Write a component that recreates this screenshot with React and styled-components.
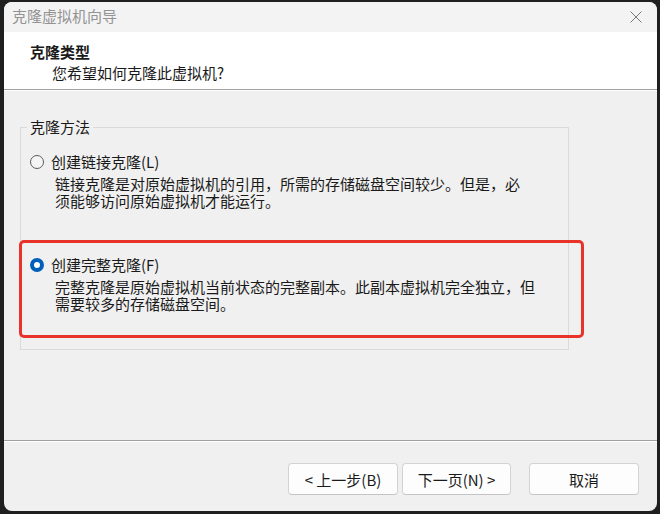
import React from 'react'
import styled, { createGlobalStyle } from 'styled-components'

const GlobalStyle = createGlobalStyle`
    html, body {
        margin: 0;
        padding: 0;
        background: #1f1f1f;
    }
    * {
        box-sizing: border-box;
    }
`

const options = [
    {
        key: 'link',
        label: '创建链接克隆(L)',
        lines: ['链接克隆是对原始虚拟机的引用，所需的存储磁盘空间较少。但是，必', '须能够访问原始虚拟机才能运行。'],
        checked: false,
    },
    {
        key: 'full',
        label: '创建完整克隆(F)',
        lines: ['完整克隆是原始虚拟机当前状态的完整副本。此副本虚拟机完全独立，但', '需要较多的存储磁盘空间。'],
        checked: true,
    },
]

const App = () => {
    return (
        <Screen>
            <GlobalStyle />
            <Window>
                <TitleBar>
                    <WindowTitle>克隆虚拟机向导</WindowTitle>
                    <CloseIcon viewBox="0 0 12 12">
                        <path d="M0.5 0.5 L11.5 11.5 M11.5 0.5 L0.5 11.5" />
                    </CloseIcon>
                </TitleBar>

                <Header>
                    <HeaderTitle>克隆类型</HeaderTitle>
                    <HeaderSub>您希望如何克隆此虚拟机?</HeaderSub>
                </Header>

                <Body>
                    <Group>
                        <Legend>克隆方法</Legend>
                        <OptionList>
                            {options.map(opt => (
                                <Option key={opt.key}>
                                    <OptionRow>
                                        <Radio $checked={opt.checked} />
                                        <OptionLabel>{opt.label}</OptionLabel>
                                    </OptionRow>
                                    <Description>
                                        {opt.lines.map(line => <Line key={line}>{line}</Line>)}
                                    </Description>
                                </Option>
                            ))}
                        </OptionList>
                    </Group>
                    <Highlight />
                </Body>

                <Footer>
                    <Button>&lt; 上一步(B)</Button>
                    <Button $w="109px">下一页(N) &gt;</Button>
                    <Button $spaced>取消</Button>
                </Footer>
            </Window>
        </Screen>
    )
}

const Screen = styled.div`
    width: 660px;
    height: 514px;
    padding: 2px 3px 3px 4px;
    background: #1f1f1f;
    font-family: "Noto Sans CJK SC", "Noto Sans", sans-serif;
    font-size: 15px;
    color: #1a1a1a;
`
const Window = styled.div`
    width: 653px;
    height: 509px;
    display: flex;
    flex-direction: column;
    border-radius: 8px;
    overflow: hidden;
    background: #f0f0f0;
`
const TitleBar = styled.div`
    height: 30px;
    flex: none;
    display: flex;
    align-items: center;
    justify-content: space-between;
    padding: 0 15px 0 8px;
    background: #f3f3f3;
`
const WindowTitle = styled.div`
    color: #939393;
    font-size: 15px;
    line-height: 20px;
    margin-top: -2px;
`
const CloseIcon = styled.svg`
    width: 12px;
    height: 12px;
    stroke: #7a7a7a;
    stroke-width: 1;
    fill: none;
`
const Header = styled.div`
    height: 58px;
    flex: none;
    background: #ffffff;
    border-bottom: 1px solid #a0a0a0;
    padding: 10px 0 0 26px;
`
const HeaderTitle = styled.div`
    font-weight: 700;
    line-height: 20px;
`
const HeaderSub = styled.div`
    margin: 1px 0 0 22px;
    line-height: 20px;
`
const Body = styled.div`
    flex: 1;
    position: relative;
    border-top: 1px solid #ffffff;
    padding: 27px 0 0 16px;
`
const Group = styled.fieldset`
    width: 549px;
    margin: 0;
    border: 1px solid #dadada;
    padding: 16px 0 37px 9px;
`
const Legend = styled.legend`
    margin-left: -3px;
    padding: 0 3px;
    line-height: 18px;
`
const OptionList = styled.div`
    display: flex;
    flex-direction: column;
    gap: 46px;
`
const Option = styled.div`
    display: flex;
    flex-direction: column;
`
const OptionRow = styled.div`
    display: flex;
    align-items: center;
    gap: 7px;
    height: 20px;
`
const Radio = styled.span`
    width: 14px;
    height: 14px;
    flex: none;
    border-radius: 50%;
    border: ${p => p.$checked ? '4px solid #005fb8' : '1px solid #5c5c5c'};
    background: ${p => p.$checked ? '#ffffff' : '#f5f5f5'};
`
const OptionLabel = styled.span`
    line-height: 20px;
`
const Description = styled.div`
    margin: 3px 0 0 25px;
    white-space: nowrap;
`
const Line = styled.div`
    height: 17px;
    line-height: 17px;
`
const Highlight = styled.div`
    position: absolute;
    left: 15px;
    top: 149px;
    width: 565px;
    height: 98px;
    border: 3px solid #e8322a;
    border-radius: 5px;
    pointer-events: none;
`
const Footer = styled.div`
    flex: none;
    height: 71px;
    display: flex;
    justify-content: flex-end;
    align-items: flex-start;
    gap: 4px;
    border-top: 1px solid #a0a0a0;
    box-shadow: inset 0 1px 0 #ffffff;
    padding: 22px 18px 0 0;
`
const Button = styled.button`
    width: ${p => p.$w || '110px'};
    height: 32px;
    margin-left: ${p => p.$spaced ? '14px' : '0'};
    background: #fdfdfd;
    border: 1px solid #d3d3d3;
    border-bottom-color: #c4c4c4;
    border-radius: 4px;
    font-family: inherit;
    font-size: 15px;
    color: #1a1a1a;
    padding: 0;
`

export default App
